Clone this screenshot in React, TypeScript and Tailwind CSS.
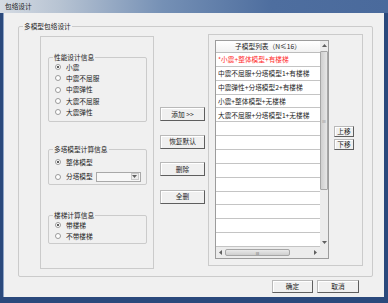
import React from "react";

type Row = { t: string; red?: boolean };

const rows: Row[] = [
  { t: "*小震+整体模型+有楼梯", red: true },
  { t: "中震不屈服+分塔模型1+有楼梯" },
  { t: "中震弹性+分塔模型2+有楼梯" },
  { t: "小震+整体模型+无楼梯" },
  { t: "大震不屈服+分塔模型1+无楼梯" },
];

function Radio({ label, checked, h = "h-[11.3px]" }: { label: string; checked?: boolean; h?: string }) {
  return (
    <div className={`flex items-center gap-[5px] leading-none ${h}`}>
      <span className="flex h-[6px] w-[6px] items-center justify-center rounded-full border border-[#9a9a9a] bg-white">
        {checked && <span className="h-[2px] w-[2px] rounded-full bg-[#2a2a2a]" />}
      </span>
      <span>{label}</span>
    </div>
  );
}

function Btn({ children, className }: { children: React.ReactNode; className: string }) {
  return (
    <div
      className={`flex items-center justify-center border border-[#b9b9b9] border-b-[#5e5e5e] border-r-[#5e5e5e] bg-[#f0f0f0] leading-none shadow-[inset_1px_1px_0_#ffffff] ${className}`}
    >
      {children}
    </div>
  );
}

function Group({ title, className, children }: { title: string; className: string; children: React.ReactNode }) {
  return (
    <div className={`relative rounded-[2px] border border-[#cbcbcb] ${className}`}>
      <span className="absolute -top-[5px] left-[4px] bg-[#f0f0f0] px-[1px] leading-[9px]">{title}</span>
      {children}
    </div>
  );
}

function Tri({ dir }: { dir: "up" | "down" | "left" | "right" }) {
  const pts = {
    up: "0,4 2.5,1 5,4",
    down: "0,1 2.5,4 5,1",
    left: "4,0 1,2.5 4,5",
    right: "1,0 4,2.5 1,5",
  }[dir];
  return (
    <svg width="5" height="5" viewBox="0 0 5 5">
      <polygon points={pts} fill="#606060" />
    </svg>
  );
}

export default function App() {
  const list: Row[] = [...rows, ...Array.from({ length: 14 - rows.length }, () => ({ t: "" }))];
  return (
    <div className="flex h-[303px] w-[388px] flex-col bg-[#2a497c] font-['Noto_Sans_CJK_SC','Noto_Sans',sans-serif] text-[6.7px] text-[#1c1c1c]">
      {/* title bar */}
      <div className="flex h-[13px] shrink-0 items-center bg-[linear-gradient(90deg,#d5dbe3_0%,#b8c4d3_15%,#7590b5_42%,#4e6e9f_70%,#4a6a9c_100%)] pl-[5px] leading-none text-[#1e1e1e]">
        包络设计
      </div>

      {/* client */}
      <div className="mb-[6px] ml-[3px] mr-[4px] flex flex-1 flex-col bg-[#f0f0f0] shadow-[inset_1px_0_0_#8ea4c6]">
        <Group title="多模型包络设计" className="ml-[15px] mt-[13px] flex h-[251px] w-[355px] items-start">
          {/* left panel */}
          <div className="ml-[21px] mt-[9px] flex h-[233px] w-[114px] flex-col border border-[#cbcbcb] pl-[7px]">
            <Group title="性能设计信息" className="mt-[20px] h-[65px] w-[99px] pl-[6px] pt-[3.4px]">
              <Radio label="小震" checked />
              <Radio label="中震不屈服" />
              <Radio label="中震弹性" />
              <Radio label="大震不屈服" />
              <Radio label="大震弹性" />
            </Group>
            <Group title="多塔模型计算信息" className="mt-[27px] h-[36px] w-[99px] pl-[6px] pt-[4.8px]">
              <Radio label="整体模型" checked h="h-[14.5px]" />
              <div className="flex h-[14.5px] items-center">
                <Radio label="分塔模型" h="h-[14.5px]" />
                <div className="ml-[3px] flex h-[10px] w-[45px] items-center justify-end border border-[#a9a9a9] bg-[#f7f7f7] pr-[1px]">
                  <div className="flex h-[7px] w-[8px] items-center justify-center border border-[#c9c9c9] bg-[#ececec]">
                    <Tri dir="down" />
                  </div>
                </div>
              </div>
            </Group>
            <Group title="楼梯计算信息" className="mt-[30px] h-[29px] w-[99px] pl-[6px] pt-[3.5px]">
              <Radio label="带楼梯" checked h="h-[11px]" />
              <Radio label="不带楼梯" h="h-[11px]" />
            </Group>
          </div>

          {/* middle buttons */}
          <div className="ml-[6px] mt-[80px] flex w-[45px] flex-col gap-[13.5px]">
            <Btn className="h-[14px] w-[45px]">添加 &gt;&gt;</Btn>
            <Btn className="h-[14px] w-[45px]">恢复默认</Btn>
            <Btn className="h-[14px] w-[45px]">删除</Btn>
            <Btn className="h-[14px] w-[45px]">全删</Btn>
          </div>

          {/* right panel */}
          <div className="ml-[3px] mt-[7px] flex h-[232px] w-[155px] items-start border border-[#cbcbcb] pl-[6px] pt-[5px]">
            <div className="flex h-[219px] w-[114px] flex-col border border-[#9c9c9c] bg-white">
              <div className="flex h-[206px]">
                <div className="flex w-[104px] flex-col">
                  <div className="flex h-[12px] items-center justify-center border-b border-[#bdbdbd] bg-[linear-gradient(#ffffff,#f2f2f2)] leading-none">
                    子模型列表（N≤16）
                  </div>
                  {list.map((r, i) => (
                    <div
                      key={i}
                      className={`flex h-[13.86px] items-center border-b border-[#c4c4c4] pl-[2px] leading-none ${r.red ? "text-[#ff2a2a]" : ""}`}
                    >
                      {r.t}
                    </div>
                  ))}
                </div>
                {/* vertical scrollbar */}
                <div className="flex w-[8px] flex-col bg-[#ececec]">
                  <div className="flex h-[9px] items-center justify-center">
                    <Tri dir="up" />
                  </div>
                  <div className="mt-[1px] flex h-[139px] items-center justify-center rounded-[1px] border border-[#a6a6a6] bg-[linear-gradient(90deg,#cfcfcf,#e6e6e6)]">
                    <span className="text-[5px] leading-none text-[#777]">≡</span>
                  </div>
                  <div className="flex-1" />
                  <div className="flex h-[9px] items-center justify-center">
                    <Tri dir="down" />
                  </div>
                </div>
              </div>
              {/* horizontal scrollbar */}
              <div className="flex h-[11px]">
                <div className="flex w-[104px] items-center bg-[#ececec]">
                  <div className="flex w-[9px] items-center justify-center">
                    <Tri dir="left" />
                  </div>
                  <div className="flex h-[7px] w-[65px] items-center justify-center rounded-[2px] border border-[#a6a6a6] bg-[linear-gradient(#e9e9e9,#cfcfcf)]">
                    <span className="text-[4px] leading-none text-[#666]">III</span>
                  </div>
                  <div className="flex-1" />
                  <div className="flex w-[9px] items-center justify-center">
                    <Tri dir="right" />
                  </div>
                </div>
                <div className="w-[8px] bg-[#ececec]" />
              </div>
            </div>
            <div className="ml-[5px] mt-[86px] flex flex-col gap-[2px]">
              <Btn className="h-[11px] w-[20px]">上移</Btn>
              <Btn className="h-[11px] w-[20px]">下移</Btn>
            </div>
          </div>
        </Group>

        {/* bottom buttons */}
        <div className="mt-[3px] flex justify-end gap-[4px] pr-[25px]">
          <Btn className="h-[13px] w-[41px]">确定</Btn>
          <Btn className="h-[13px] w-[42px]">取消</Btn>
        </div>
      </div>
    </div>
  );
}
